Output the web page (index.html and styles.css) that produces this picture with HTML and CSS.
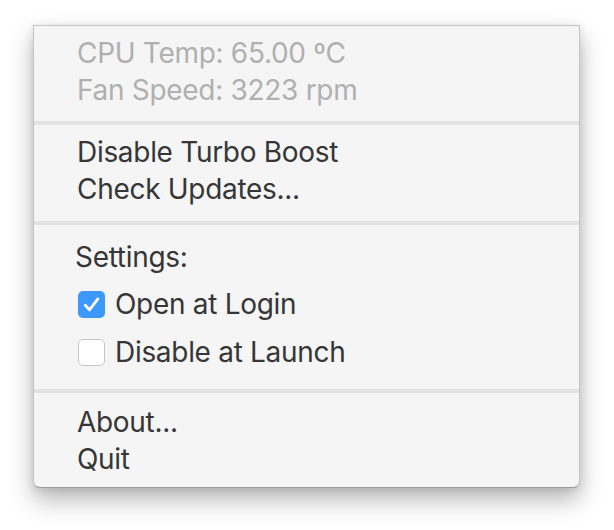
FILE: index.html
```html
<!DOCTYPE html>
<html>
<head>
<meta charset="utf-8">
<link rel="stylesheet" href="styles.css">
</head>
<body>
<div class="menu">
  <div class="section first">
    <div class="item disabled">CPU Temp: 65.00 ºC</div>
    <div class="item disabled">Fan Speed: 3223 rpm</div>
  </div>
  <div class="sep"></div>
  <div class="section second">
    <div class="item">Disable Turbo Boost</div>
    <div class="item">Check Updates...</div>
  </div>
  <div class="sep"></div>
  <div class="section settings">
    <div class="item label">Settings:</div>
    <div class="check-row">
      <span class="box checked"><svg viewBox="0 0 27 27" width="27" height="27"><path d="M7.3 14.3 L11.5 18.9 L19.9 7.9" fill="none" stroke="#fff" stroke-width="2.8" stroke-linecap="round" stroke-linejoin="round"/></svg></span>
      <span class="item">Open at Login</span>
    </div>
    <div class="check-row">
      <span class="box"></span>
      <span class="item">Disable at Launch</span>
    </div>
  </div>
  <div class="sep"></div>
  <div class="section last">
    <div class="item">About...</div>
    <div class="item">Quit</div>
  </div>
</div>
</body>
</html>
```
FILE: styles.css
```css
html, body {
  margin: 0;
  padding: 0;
  background: #ffffff;
}
body {
  padding: 25px 0 0 33px;
  min-height: 530px;
  box-sizing: border-box;
  font-family: "Inter", "Liberation Sans", sans-serif;
}
.menu {
  width: 547px;
  height: 463px;
  box-sizing: border-box;
  background: #f5f5f5;
  border: 1px solid #c4c4c4;
  border-bottom-color: #9a9a9a;
  border-radius: 0 0 7px 7px;
  box-shadow: 0 12px 24px rgba(0,0,0,0.28), 0 2px 8px rgba(0,0,0,0.10);
  display: flex;
  flex-direction: column;
}
.section {
  display: flex;
  flex-direction: column;
  padding-left: 43px;
}
.section.first {
  padding-top: 9px;
  padding-bottom: 12px;
}
.section.second {
  padding-top: 9px;
  padding-bottom: 13px;
}
.section.settings {
  padding: 14px 0 13px 41px;
}
.section.last {
  padding-top: 11px;
}
.item {
  font-size: 28px;
  line-height: 37px;
  color: #363636;
  letter-spacing: -0.3px;
  white-space: nowrap;
}
.item.disabled {
  color: #b0b0b0;
}
.sep {
  height: 4px;
  background: #e3e3e3;
  flex: none;
}
.check-row {
  display: flex;
  align-items: center;
  gap: 10px;
  height: 48px;
  padding-left: 3px;
}
.label + .check-row {
  margin-top: 4px;
}
.box {
  width: 27px;
  height: 27px;
  box-sizing: border-box;
  border-radius: 5px;
  background: #ffffff;
  border: 1px solid #c6c6c6;
  flex: none;
  display: flex;
}
.box.checked {
  background: #3d98fb;
  border: none;
}
```
